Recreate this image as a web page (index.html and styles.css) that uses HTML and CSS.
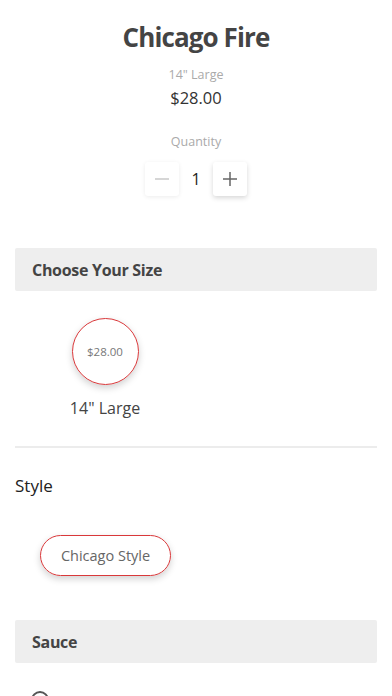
FILE: index.html
```html
<!DOCTYPE html>
<html>
<head>
<meta charset="utf-8">
<link rel="stylesheet" href="styles.css">
</head>
<body>
<div class="page">
  <div class="hero">
    <h1 class="title">Chicago Fire</h1>
    <div class="size-sub">14" Large</div>
    <div class="price">$28.00</div>
    <div class="qty-label">Quantity</div>
    <div class="stepper">
      <div class="step-btn disabled">
        <svg width="16" height="16" viewBox="0 0 16 16"><path d="M1 8h14" stroke="#c8c8c8" stroke-width="1.5" fill="none"/></svg>
      </div>
      <div class="qty">1</div>
      <div class="step-btn raised">
        <svg width="16" height="16" viewBox="0 0 16 16"><path d="M1 8h14M8 1v14" stroke="#666" stroke-width="1.5" fill="none"/></svg>
      </div>
    </div>
  </div>

  <div class="section-head">Choose Your Size</div>
  <div class="size-options">
    <div class="size-item">
      <div class="size-circle">$28.00</div>
      <div class="size-name">14" Large</div>
    </div>
  </div>
  <div class="divider"></div>

  <div class="group-label">Style</div>
  <div class="pills">
    <div class="pill">Chicago Style</div>
  </div>

  <div class="section-head sauce">Sauce</div>
  <div class="radio-row">
    <div class="radio"></div>
  </div>
</div>
</body>
</html>
```
FILE: styles.css
```css
* { box-sizing: border-box; }
html, body { margin: 0; padding: 0; background: #fff; }
body {
  font-family: "Open Sans", "Noto Sans", sans-serif;
  width: 392px;
  height: 696px;
  overflow: hidden;
}
.page { padding: 0 15px; }
.hero {
  display: flex;
  flex-direction: column;
  align-items: center;
}
.title {
  margin: 22px 0 0;
  font-size: 26px;
  line-height: 30px;
  font-weight: 700;
  color: #444;
  letter-spacing: -0.9px;
}
.size-sub {
  margin-top: 15px;
  font-size: 12.5px;
  line-height: 16px;
  color: #aaa;
}
.price {
  margin-top: 5px;
  font-size: 16.5px;
  line-height: 20px;
  color: #333;
}
.qty-label {
  margin-top: 26px;
  font-size: 12.5px;
  line-height: 16px;
  color: #aaa;
}
.stepper {
  margin-top: 12px;
  display: flex;
  align-items: center;
}
.step-btn {
  width: 34px;
  height: 34px;
  display: flex;
  align-items: center;
  justify-content: center;
  border-radius: 3px;
  background: #fff;
  box-shadow: 0 1px 4px rgba(0,0,0,0.08);
}
.step-btn.raised { box-shadow: 0 2px 5px rgba(0,0,0,0.16); }
.qty {
  width: 34px;
  text-align: center;
  font-size: 16px;
  color: #222;
}
.section-head {
  margin-top: 52px;
  height: 43px;
  background: #eee;
  border-radius: 2px;
  display: flex;
  align-items: center;
  padding-left: 17px;
  font-size: 16px;
  font-weight: 700;
  color: #444;
  letter-spacing: -0.3px;
}
.section-head.sauce { margin-top: 44px; }
.size-options {
  display: flex;
  padding-left: 45px;
  margin-top: 27px;
}
.size-item {
  width: 90px;
  display: flex;
  flex-direction: column;
  align-items: center;
}
.size-circle {
  width: 67px;
  height: 67px;
  border-radius: 50%;
  border: 1.5px solid #d9383a;
  box-shadow: 0 3px 7px rgba(0,0,0,0.18);
  display: flex;
  align-items: center;
  justify-content: center;
  font-size: 11.5px;
  color: #777;
}
.size-name {
  margin-top: 13px;
  font-size: 16px;
  line-height: 20px;
  color: #444;
}
.divider {
  margin-top: 28px;
  height: 2px;
  background: #ececec;
}
.group-label {
  margin-top: 27px;
  font-size: 17px;
  line-height: 22px;
  color: #222;
}
.pills {
  display: flex;
  margin-top: 38px;
  padding-left: 25px;
}
.pill {
  height: 41px;
  width: 131px;
  border: 1.5px solid #d9383a;
  border-radius: 21px;
  box-shadow: 0 3px 7px rgba(0,0,0,0.18);
  display: flex;
  align-items: center;
  justify-content: center;
  font-size: 14.5px;
  color: #666;
}
.radio-row {
  margin-top: 28px;
  padding-left: 16px;
}
.radio {
  width: 18px;
  height: 18px;
  border-radius: 50%;
  border: 2px solid #555;
}
```
